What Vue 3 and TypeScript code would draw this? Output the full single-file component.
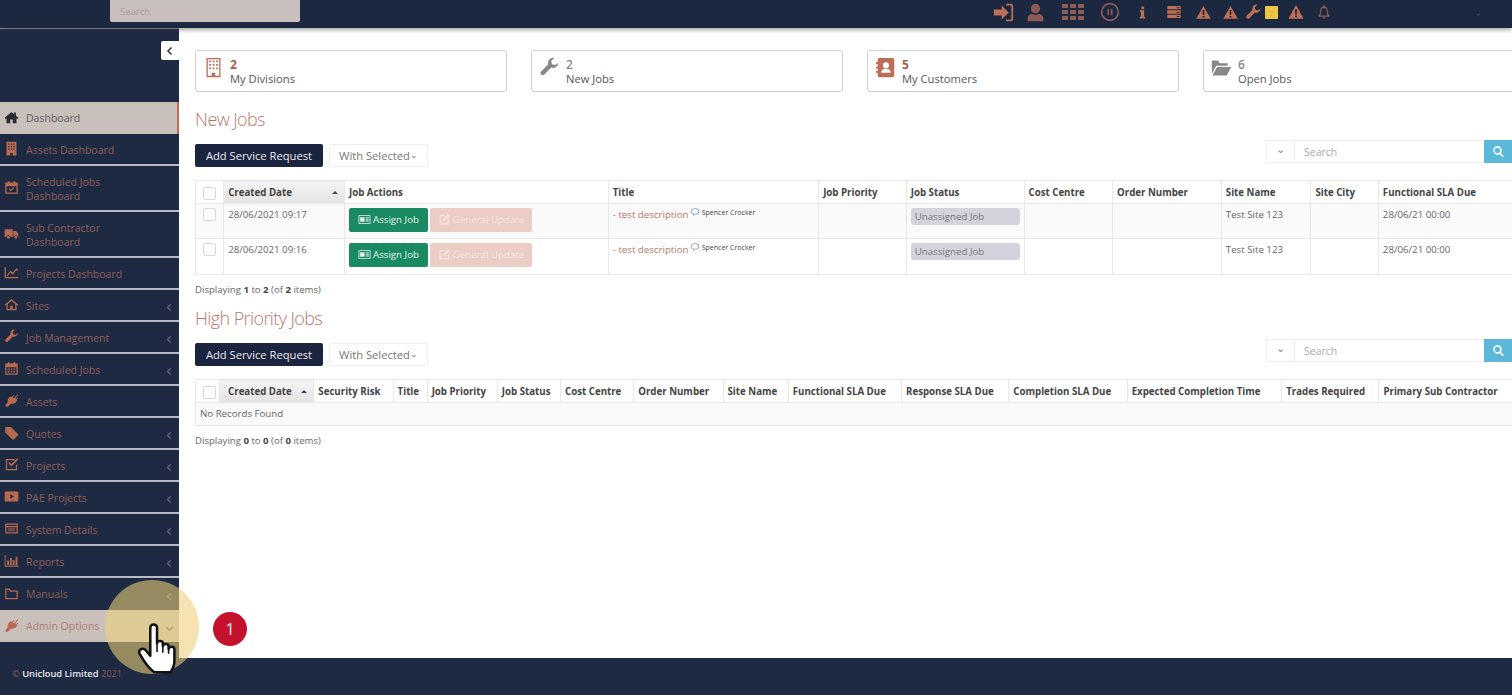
<script setup lang="ts">
const icons: Record<string, string> = {
  home: 'M12 3 1 12.5l1.5 1.7L4 13v8h6v-6h4v6h6v-8l1.5 1.2 1.5-1.7-4-3.5V4h-3v2.7z',
  homeO: 'M12 3 1 12.5l1.2 1.4L4 12.4V21h16v-8.6l1.8 1.5 1.2-1.4zM6 11l6-5.2 6 5.2v8h-4v-5h-4v5H6z',
  building: 'M4 1h16v22h-6v-4h-4v4H4zM7 4v2h2V4zm4 0v2h2V4zm4 0v2h2V4zM7 8v2h2V8zm4 0v2h2V8zm4 0v2h2V8zM7 12v2h2v-2zm4 0v2h2v-2zm4 0v2h2v-2z',
  buildingO: 'M4 1h16v22H4zM5.500 2.500v19H10V18h4v3.500h4.500v-19zM7 4h2v2H7zm4 0h2v2h-2zm4 0h2v2h-2zM7 8h2v2H7zm4 0h2v2h-2zm4 0h2v2h-2zM7 12h2v2H7zm4 0h2v2h-2zm4 0h2v2h-2z',
  calCheck: 'M2 4h4V2h3v2h6V2h3v2h4v18H2zm2 6v10h16V10zm3.500 4.500L9 13l2 2 4-4 1.500 1.500L11 18z',
  truck: 'M1 5h13v12H9.500a2.500 2.500 0 0 0-5 0H1zM15 8h4l4 4v5h-1.500a2.500 2.500 0 0 0-5 0H15zM7 16a2.200 2.200 0 1 1 0 4.400A2.200 2.200 0 0 1 7 16zm12 0a2.200 2.200 0 1 1 0 4.400 2.200 2.200 0 0 1 0-4.400z',
  chart: 'M1 3h2v16h20v2H1zM5 16l5-7 4 3 6-7 2 1.500V10l-2-1.500-6 6.500-4-3-4 6H5z',
  wrench: 'M22 6.500a6 6 0 0 1-8 5.600L6.200 20a2.500 2.500 0 0 1-3.600-3.600l7.900-7.800A6 6 0 0 1 17.500 1L14 4.500l.8 3.700 3.700.8z',
  calendar: 'M2 4h4V2h3v2h6V2h3v2h4v18H2zm2 6v10h16V10zm2 2h3v2H6zm4.500 0h3v2h-3zm4.500 0h3v2h-3zM6 16h3v2H6zm4.500 0h3v2h-3zm4.500 0h3v2h-3z',
  plug: 'M22 2l1 1-5 5 1.500 1.500L22 7l1 1-3 3 1.500 1.500-2 1.500c-2 3-6 4-8.500 3L7 21l-1 1H3v-1l-1-2 4-4c-1-2.500 0-6 3-8.500L11 5l1.500 1.500 3-3.500 1 1-2.500 3 1.500 1.500z',
  tag: 'M2 3h9l11 11a2 2 0 0 1 0 2.800l-6 6a2 2 0 0 1-2.800 0L2 12z',
  checkSquare: 'M3 3h15l-2 2H5v14h14v-6l2-2v10H3zM7 10l2-2 3 3 9-9 2 2-11 11z',
  play: 'M3 4h18a2 2 0 0 1 2 2v12a2 2 0 0 1-2 2H3a2 2 0 0 1-2-2V6a2 2 0 0 1 2-2zm7 4.500v7l6-3.500z',
  card: 'M2 4h20v16H2zm2 2v2h16V6zm0 4v8h16v-8zm2 2h12v1.500H6zm0 3h12v1.500H6z',
  bars: 'M1 3h1.500v17H23v2H1zM5 12h3v7H5zm4.500-4h3v11h-3zM14 11h3v8h-3zm4.500-5h3v13h-3z',
  folderO: 'M2 4h7l2 3h11v14H2zm2 2v13h16V9H10L8 6z',
  addr: 'M5 1h15a2 2 0 0 1 2 2v18a2 2 0 0 1-2 2H5a2 2 0 0 1-2-2v-3H1v-2h2v-3H1v-2h2V8H1V6h2V3a2 2 0 0 1 2-2zm7.500 5a3.500 3.500 0 1 0 0 7 3.500 3.500 0 0 0 0-7zM7 18h11c0-3-2-4.500-5.500-4.500S7 15 7 18z',
  folderOpen: 'M1 4h7l2 3h9v3H6L1 19zM7 11.500h16L18 21H1.500z',
  login: 'M1 8.500h9V4l8 8-8 8v-4.500H1zM15 2h5a3 3 0 0 1 3 3v14a3 3 0 0 1-3 3h-5v-2h5a1 1 0 0 0 1-1V5a1 1 0 0 0-1-1h-5z',
  user: 'M12 1a5.800 5.800 0 0 1 5.800 6c0 3-1.800 6-5.800 6s-5.800-3-5.800-6A5.800 5.800 0 0 1 12 1zM2 23v-4c0-3 3-5 6-5.500 1 1 2.500 1.500 4 1.500s3-.5 4-1.500c3 .5 6 2.500 6 5.500v4z',
  grid: 'M1 4h6v4H1zm8 0h6v4H9zm8 0h6v4h-6zM1 10h6v4H1zm8 0h6v4H9zm8 0h6v4h-6zM1 16h6v4H1zm8 0h6v4H9zm8 0h6v4h-6z',
  pause: 'M12 1a11 11 0 1 1 0 22 11 11 0 0 1 0-22zm0 2a9 9 0 1 0 0 18 9 9 0 0 0 0-18zM9 8h2v8H9zm4 0h2v8h-2z',
  info: 'M10 1h5v5h-5zM7 8h8v12h2v3H7v-3h2v-9H7z',
  server: 'M2 3h20v5H2zm0 6.500h20v5H2zM2 16h20v5H2zM16 5v1.500h4V5zm0 6.500V13h4v-1.500zm0 6.500v1.500h4V18z',
  warn: 'M12 1.500 23.500 22H.5zM10.500 8l.4 8h2.200l.4-8zM10.500 17.500v2.500h3v-2.500z',
  bell: 'M12 1a2 2 0 0 1 2 2c3 1 4.500 3.500 4.500 7 0 4 1 6 3 8v2h-19v-2c2-2 3-4 3-8 0-3.500 1.500-6 4.500-7a2 2 0 0 1 2-2zm0 4c-3 0-4.500 2-4.500 5 0 3.500-.7 6-2 8h13c-1.300-2-2-4.500-2-8 0-3-1.500-5-4.500-5zM9.500 21h5a2.500 2.500 0 0 1-5 0z',
  search: 'M10 2a8 8 0 0 1 6.300 12.900l5.700 5.700-2.100 2.100-5.700-5.700A8 8 0 1 1 10 2zm0 3a5 5 0 1 0 0 10 5 5 0 0 0 0-10z',
  idcard: 'M1 4h22v16H1zm1.500 1.500v13h19v-13zM4 8h8v8H4zm10 0h6v1.500h-6zm0 3h6v1.500h-6zm0 3h6v1.500h-6z',
  edit: 'M3 4h11l-2 2H5v13h13v-6l2-2v10H3zM19 2l3 3-10 10H9v-3z',
  comment: 'M12 3c6 0 10.500 3 10.500 7.500S18 18 12 18l-5 4 1-4.800C4 16 1.500 13.500 1.500 10.500 1.500 6 6 3 12 3zm0 2c-5 0-8.500 2.300-8.500 5.500 0 2.300 2 4.200 5 5.200l1 .3-.4 2 2.300-1.900c5.100 0 8.600-2.300 8.600-5.600C20.500 7.300 17 5 12 5z',
}

const navItems = [
  { label: 'Dashboard', icon: 'home', active: true },
  { label: 'Assets Dashboard', icon: 'building' },
  { label: 'Scheduled Jobs Dashboard', icon: 'calCheck', tall: true },
  { label: 'Sub Contractor Dashboard', icon: 'truck', tall: true },
  { label: 'Projects Dashboard', icon: 'chart' },
  { label: 'Sites', icon: 'homeO', more: true },
  { label: 'Job Management', icon: 'wrench', more: true },
  { label: 'Scheduled Jobs', icon: 'calendar', more: true },
  { label: 'Assets', icon: 'plug' },
  { label: 'Quotes', icon: 'tag', more: true },
  { label: 'Projects', icon: 'checkSquare', more: true },
  { label: 'PAE Projects', icon: 'play', more: true },
  { label: 'System Details', icon: 'card', more: true },
  { label: 'Reports', icon: 'bars', more: true },
  { label: 'Manuals', icon: 'folderO', more: true, last: true },
  { label: 'Admin Options', icon: 'plug', active: true, open: true, last: true },
]

const topIcons = [
  { name: 'login', x: 0, w: 21 },
  { name: 'user', x: 12, w: 19, dim: true },
  { name: 'grid', x: 16, w: 24, dim: true },
  { name: 'pause', x: 15, w: 20, dim: true },
  { name: 'info', x: 16, w: 13 },
  { name: 'server', x: 17, w: 16 },
  { name: 'warn', x: 14, w: 15 },
  { name: 'warn', x: 12, w: 15 },
  { name: 'wrench', x: 7, w: 17 },
]

const stats = [
  { value: 2, label: 'My Divisions', icon: 'buildingO', tone: 'red' },
  { value: 2, label: 'New Jobs', icon: 'wrench', tone: 'grey' },
  { value: 5, label: 'My Customers', icon: 'addr', tone: 'red' },
  { value: 6, label: 'Open Jobs', icon: 'folderOpen', tone: 'grey' },
]

const newJobCols = [
  { label: 'Created Date', w: 120, sorted: true },
  { label: 'Job Actions', w: 262 },
  { label: 'Title', w: 209 },
  { label: 'Job Priority', w: 87 },
  { label: 'Job Status', w: 117 },
  { label: 'Cost Centre', w: 88 },
  { label: 'Order Number', w: 108 },
  { label: 'Site Name', w: 89 },
  { label: 'Site City', w: 67 },
  { label: 'Functional SLA Due', w: 160 },
]

const priorityCols = [
  { label: 'Created Date', w: 94, sorted: true },
  { label: 'Security Risk', w: 79 },
  { label: 'Title', w: 34 },
  { label: 'Job Priority', w: 70 },
  { label: 'Job Status', w: 63 },
  { label: 'Cost Centre', w: 73 },
  { label: 'Order Number', w: 89 },
  { label: 'Site Name', w: 65 },
  { label: 'Functional SLA Due', w: 113 },
  { label: 'Response SLA Due', w: 107 },
  { label: 'Completion SLA Due', w: 118 },
  { label: 'Expected Completion Time', w: 154 },
  { label: 'Trades Required', w: 97 },
  { label: 'Primary Sub Contractor', w: 160 },
]

const jobs = [
  { created: '28/06/2021 09:17', site: 'Test Site 123', due: '28/06/21 00:00' },
  { created: '28/06/2021 09:16', site: 'Test Site 123', due: '28/06/21 00:00' },
]
</script>

<template>
  <div class="app">
    <header class="topbar">
      <div class="top-search">Search</div>
      <div class="top-icons">
        <svg
          v-for="(ic, i) in topIcons"
          :key="i"
          class="top-icon"
          :class="{ dim: ic.dim }"
          viewBox="0 0 24 24"
          :style="{ marginLeft: ic.x + 'px', width: ic.w + 'px', height: ic.w + 'px' }"
        >
          <path :d="icons[ic.name]" fill-rule="evenodd" />
        </svg>
        <span class="help-badge">?</span>
        <svg class="top-icon warn-last" viewBox="0 0 24 24"><path :d="icons.warn" fill-rule="evenodd" /></svg>
        <svg class="top-icon bell" viewBox="0 0 24 24"><path :d="icons.bell" fill-rule="evenodd" /></svg>
        <span class="top-chev">⌄</span>
      </div>
    </header>

    <div class="middle">
      <aside class="sidebar">
        <button class="collapse">
          <svg viewBox="0 0 10 10"><path d="M6.500 1.500 3 5l3.500 3.500" /></svg>
        </button>
        <nav class="nav">
          <a
            v-for="item in navItems"
            :key="item.label"
            class="nav-item"
            :class="{ active: item.active, tall: item.tall, last: item.last }"
          >
            <svg class="nav-icon" viewBox="0 0 24 24"><path :d="icons[item.icon]" fill-rule="evenodd" /></svg>
            <span class="nav-label">{{ item.label }}</span>
            <svg v-if="item.more" class="nav-more" viewBox="0 0 10 10"><path d="M6.500 1.500 3 5l3.500 3.500" /></svg>
            <svg v-if="item.open" class="nav-more" viewBox="0 0 10 10"><path d="M1.500 3.500 5 7l3.500-3.500" /></svg>
          </a>
        </nav>
      </aside>

      <main class="main">
        <div class="stats">
          <div v-for="s in stats" :key="s.label" class="stat" :class="s.tone">
            <div class="stat-icon">
              <svg viewBox="0 0 24 24"><path :d="icons[s.icon]" fill-rule="evenodd" /></svg>
            </div>
            <div>
              <div class="stat-value">{{ s.value }}</div>
              <div class="stat-label">{{ s.label }}</div>
            </div>
          </div>
        </div>

        <section class="block">
          <h2>New Jobs</h2>
          <div class="toolbar">
            <div class="actions">
              <button class="btn-dark">Add Service Request</button>
              <button class="btn-light">With Selected<span class="caret">⌄</span></button>
            </div>
            <div class="searchbox">
              <span class="search-drop">⌄</span>
              <span class="search-input">Search</span>
              <span class="search-btn"><svg viewBox="0 0 24 24"><path :d="icons.search" fill-rule="evenodd" /></svg></span>
            </div>
          </div>
          <table class="grid-table">
            <thead>
              <tr>
                <th class="check-col wide"><span class="check"></span></th>
                <th v-for="c in newJobCols" :key="c.label" :class="{ sorted: c.sorted }" :style="{ width: c.w + 'px' }">
                  {{ c.label }}<i v-if="c.sorted" class="arrow"></i>
                </th>
              </tr>
            </thead>
            <tbody>
              <tr v-for="job in jobs" :key="job.created" class="job-row">
                <td class="check-col"><span class="check"></span></td>
                <td>{{ job.created }}</td>
                <td class="action-cell">
                  <button class="btn-assign">
                    <svg viewBox="0 0 24 24"><path :d="icons.idcard" fill-rule="evenodd" /></svg>Assign Job
                  </button>
                  <button class="btn-update">
                    <svg viewBox="0 0 24 24"><path :d="icons.edit" fill-rule="evenodd" /></svg>General Update
                  </button>
                </td>
                <td class="title-cell">
                  <span class="job-title">- test description</span>
                  <svg class="comment" viewBox="0 0 24 24"><path :d="icons.comment" fill-rule="evenodd" /></svg>
                  <span class="author">Spencer Crocker</span>
                </td>
                <td></td>
                <td class="status-cell"><span class="status">Unassigned Job</span></td>
                <td></td>
                <td></td>
                <td>{{ job.site }}</td>
                <td></td>
                <td>{{ job.due }}</td>
              </tr>
            </tbody>
          </table>
          <p class="count">Displaying <b>1</b> to <b>2</b> (of <b>2</b> items)</p>
        </section>

        <section class="block second">
          <h2>High Priority Jobs</h2>
          <div class="toolbar">
            <div class="actions">
              <button class="btn-dark">Add Service Request</button>
              <button class="btn-light">With Selected<span class="caret">⌄</span></button>
            </div>
            <div class="searchbox">
              <span class="search-drop">⌄</span>
              <span class="search-input">Search</span>
              <span class="search-btn"><svg viewBox="0 0 24 24"><path :d="icons.search" fill-rule="evenodd" /></svg></span>
            </div>
          </div>
          <table class="grid-table">
            <thead>
              <tr>
                <th class="check-col"><span class="check"></span></th>
                <th
                  v-for="c in priorityCols"
                  :key="c.label"
                  :class="{ sorted: c.sorted, inset: c.sorted }"
                  :style="{ width: c.w + 'px' }"
                >
                  {{ c.label }}<i v-if="c.sorted" class="arrow"></i>
                </th>
              </tr>
            </thead>
            <tbody>
              <tr class="empty-row">
                <td :colspan="priorityCols.length + 1">No Records Found</td>
              </tr>
            </tbody>
          </table>
          <p class="count">Displaying <b>0</b> to <b>0</b> (of <b>0</b> items)</p>
        </section>
      </main>
    </div>

    <footer class="footer">
      <span class="copy">©</span> <b>Unicloud Limited</b> <span class="year">2021</span>
    </footer>

    <div class="spotlight"></div>
    <div class="step">1</div>
    <svg class="hand" viewBox="0 0 42 56">
      <path
        d="M13 6a3.500 3.500 0 0 1 7 0v16c0-3 6-3 6 0v3c0-3 6-3 6 0v3c0-3 6-3 6 0v13c0 5-2 8-4 11H17C13 49 7 42 2 33c-2-4 3-7 6-4l5 6z"
        fill="#fff"
        stroke="#111"
        stroke-width="2.600"
        stroke-linejoin="round"
      />
      <path d="M20 22v9M26 25v7M32 28v5" fill="none" stroke="#111" stroke-width="1.600" />
    </svg>
  </div>
</template>

<style>
html,
body {
  margin: 0;
  height: 695px;
  overflow: hidden;
  background: #fff;
}
</style>

<style scoped>
.app {
  position: relative;
  width: 1512px;
  height: 695px;
  display: flex;
  flex-direction: column;
  overflow: hidden;
  font-family: "Open Sans", "Liberation Sans", sans-serif;
  font-size: 10.5px;
  color: #666;
  filter: blur(0.5px);
}

/* top bar */
.topbar {
  position: relative;
  z-index: 2;
  flex: 0 0 28px;
  display: flex;
  background: #1c2740;
  box-shadow: 0 2px 4px rgba(60, 60, 70, 0.45);
}

.top-search {
  width: 190px;
  height: 22px;
  margin-left: 110px;
  padding-left: 10px;
  box-sizing: border-box;
  line-height: 23px;
  font-size: 9.5px;
  color: #a8a09e;
  background: #c9bfbc;
  border-radius: 0 0 2px 2px;
}

.top-icons {
  display: flex;
  align-items: center;
  height: 24px;
  margin-left: 693px;
  color: #bd6f55;
}

.top-icon {
  flex: none;
  fill: currentColor;
}

.top-icon.dim {
  color: #8a5c54;
}

.help-badge {
  width: 13px;
  height: 13px;
  margin-left: 3px;
  line-height: 13px;
  text-align: center;
  font-size: 8px;
  color: #d9a93a;
  background: #ecc745;
  border-radius: 1px;
}

.warn-last {
  width: 16px;
  height: 16px;
  margin-left: 10px;
}

.bell {
  width: 14px;
  height: 14px;
  margin-left: 13px;
  color: #8f5f55;
}

.top-chev {
  margin-left: 143px;
  font-size: 10px;
  line-height: 8px;
  color: #3d4660;
}

.middle {
  flex: 1;
  display: flex;
  min-height: 0;
}

/* sidebar */
.sidebar {
  position: relative;
  flex: 0 0 179px;
  box-sizing: border-box;
  padding-top: 74px;
  background: #1e2a42;
  border-top: 1px solid #8f94a3;
}

.collapse {
  position: absolute;
  top: 12px;
  right: 0;
  width: 18px;
  height: 19px;
  padding: 0;
  border: 0;
  border-radius: 2px 0 0 2px;
  background: #fff;
}

.collapse svg {
  display: block;
  width: 10px;
  height: 10px;
  margin: auto;
  fill: none;
  stroke: #333;
  stroke-width: 1.500;
}

.nav {
  display: flex;
  flex-direction: column;
  margin-top: -1px;
}

.nav-item {
  position: relative;
  box-sizing: border-box;
  height: 32px;
  display: flex;
  align-items: center;
  padding: 2px 0 0 26px;
  line-height: 14.500px;
  color: #905e57;
  border-bottom: 2px solid #b9bac6;
}

.nav-item.tall {
  height: 46px;
}

.nav-item.tall .nav-label {
  width: 90px;
}

.nav-item.last {
  border-bottom: 0;
  padding-top: 0;
}

.nav-item.active {
  color: #ae7f76;
  background: #c9c0bc;
  border-bottom: 0;
  padding-top: 0;
}

.nav-item:first-child {
  color: #5f5a5e;
  border-right: 2px solid #bd6c58;
}

.nav-item:first-child .nav-icon {
  color: #2a2a33;
}

.nav-icon {
  position: absolute;
  left: 4px;
  top: 50%;
  width: 15px;
  height: 15px;
  margin-top: -8px;
  fill: currentColor;
  color: #b8694f;
}

.nav-more {
  position: absolute;
  right: 5px;
  top: 50%;
  width: 9px;
  height: 9px;
  margin-top: -2px;
  fill: none;
  stroke: #5e6270;
  stroke-width: 1.500;
}

/* main */
.main {
  flex: 1;
  min-width: 0;
  padding: 22px 0 0 16px;
  overflow: hidden;
  background: #fff;
}

.stats {
  display: flex;
  gap: 24px;
}

.stat {
  flex: 0 0 312px;
  box-sizing: border-box;
  height: 42px;
  display: flex;
  padding: 7px 0 0 8px;
  border: 1px solid #cfcfcf;
  border-radius: 3px;
}

.stat-icon {
  width: 26px;
}

.stat-icon svg {
  display: block;
  width: 21px;
  height: 21px;
  margin: -1px 0 0 -1px;
  fill: #888;
}

.stat.red .stat-icon svg {
  fill: #bd6c58;
}

.stat-value {
  font-size: 12px;
  line-height: 14px;
  font-weight: 600;
  color: #888;
}

.stat.red .stat-value {
  font-weight: 700;
  color: #a95c50;
}

.stat-label {
  font-size: 11.200px;
  line-height: 14px;
  color: #555;
}

.block {
  margin-top: 14px;
}

.block.second {
  margin-top: 8px;
}

h2 {
  margin: 0;
  font-size: 18px;
  line-height: 26px;
  font-weight: 300;
  letter-spacing: -0.6px;
  color: #b5796a;
}

.toolbar {
  display: flex;
  justify-content: space-between;
  height: 27px;
  margin-top: 8px;
}

.actions {
  display: flex;
  gap: 6px;
  padding-top: 4px;
}

.actions button {
  height: 23px;
  padding: 0;
  font: inherit;
  font-size: 11.200px;
  border-radius: 2px;
}

.btn-dark {
  width: 128px;
  color: #e8e8ee;
  background: #1c2540;
  border: 0;
}

.btn-light {
  width: 99px;
  color: #777;
  background: #fff;
  border: 1px solid #eee;
}

.caret {
  font-size: 9px;
  position: relative;
  top: -2px;
}

.searchbox {
  display: flex;
  width: 246px;
  height: 23px;
  box-sizing: border-box;
  border: 1px solid #eee;
  border-right: 0;
}

.search-drop {
  width: 27px;
  line-height: 16px;
  text-align: center;
  color: #888;
  border-right: 1px solid #eee;
}

.search-input {
  flex: 1;
  padding-left: 9px;
  line-height: 22px;
  color: #aaa;
}

.search-btn {
  width: 28px;
  margin: -1px 0;
  display: flex;
  align-items: center;
  justify-content: center;
  background: #5bb8d8;
}

.search-btn svg {
  width: 13px;
  height: 13px;
  fill: #fff;
}

/* tables */
.grid-table {
  margin-top: 13px;
  table-layout: fixed;
  width: 1345px;
  border-collapse: collapse;
  font-size: 9.700px;
}

.grid-table th,
.grid-table td {
  box-sizing: border-box;
  border: 1px solid #e8e8e8;
  padding: 4px;
  text-align: left;
  vertical-align: top;
  line-height: 14px;
  white-space: nowrap;
}

.grid-table th {
  height: 23px;
  padding-top: 5px;
  padding-bottom: 3px;
  font-weight: 700;
  color: #444;
  vertical-align: middle;
}

.grid-table th.sorted {
  position: relative;
  background: linear-gradient(#f4f4f4, #e4e4e4);
}

.grid-table th.inset {
  padding-left: 8px;
}

.arrow {
  position: absolute;
  right: 6px;
  top: 10px;
  border-left: 3px solid transparent;
  border-right: 3px solid transparent;
  border-bottom: 3px solid #444;
}

.check-col {
  width: 24px;
  padding-left: 6px !important;
}

.check-col.wide {
  width: 28px;
}

.check {
  display: block;
  width: 13px;
  height: 13px;
  margin-left: 1px;
  box-sizing: border-box;
  border: 1px solid #d8d8d8;
  border-radius: 2px;
  background: #fff;
}

.job-row {
  height: 35px;
}

.job-row:first-child {
  background: #fafafa;
}

.job-row:last-child {
  height: 36px;
}

.grid-table td.action-cell,
.grid-table td.status-cell {
  padding-top: 4px;
}

.action-cell button {
  height: 24px;
  padding: 0;
  border: 0;
  border-radius: 2px;
  font: inherit;
  margin-right: 2px;
  vertical-align: top;
}

.action-cell svg {
  width: 13px;
  height: 13px;
  margin-right: 2px;
  fill: currentColor;
  vertical-align: -3px;
}

.btn-assign {
  width: 79px;
  color: #e8f4ef;
  background: #1a8a63;
}

.btn-update {
  width: 102px;
  color: #f6e6e2;
  background: #eccdc6;
}

.title-cell {
  position: relative;
}

.job-title {
  color: #b5796a;
}

.comment {
  position: absolute;
  left: 81px;
  top: 3px;
  width: 10px;
  height: 10px;
  fill: #7f9fc0;
}

.author {
  position: absolute;
  left: 93px;
  top: 2px;
  font-size: 7px;
  color: #444;
}

.status {
  display: block;
  height: 17px;
  line-height: 17px;
  padding-left: 4px;
  background: #d3d2dd;
  border-radius: 3px;
  color: #777;
}

.grid-table .empty-row td {
  height: 23px;
  padding-top: 4px;
  background: #fafafa;
}

.count {
  margin: 8px 0 0;
  font-size: 9.600px;
  line-height: 14px;
}

.count b {
  color: #444;
}

/* footer */
.footer {
  flex: 0 0 37px;
  box-sizing: border-box;
  padding: 9px 0 0 12px;
  font-size: 9.300px;
  line-height: 14px;
  background: #1e2a42;
  color: #e8e8ee;
}

.copy,
.year {
  color: #8a5a54;
}

.footer b {
  font-weight: 600;
}

/* tutorial overlay */
.spotlight {
  position: absolute;
  left: 105px;
  top: 580px;
  width: 94px;
  height: 94px;
  border-radius: 50%;
  background: rgba(238, 208, 120, 0.58);
}

.step {
  position: absolute;
  left: 213px;
  top: 612px;
  width: 34px;
  height: 34px;
  line-height: 34px;
  border-radius: 50%;
  text-align: center;
  font-size: 17px;
  color: #fbe8e8;
  background: #c4122d;
}

.hand {
  position: absolute;
  left: 137px;
  top: 622px;
  width: 42px;
  height: 54px;
}
</style>
